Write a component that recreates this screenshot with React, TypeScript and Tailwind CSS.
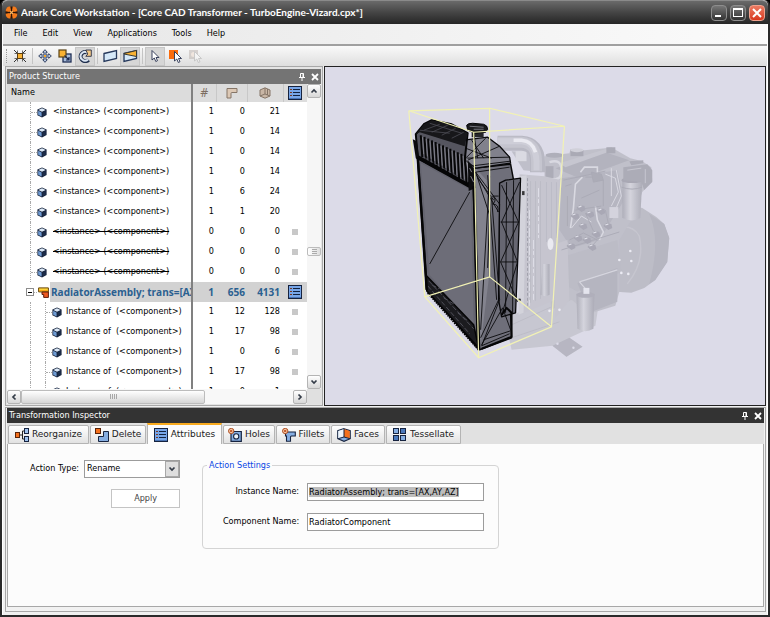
import { useEffect, useRef } from "react";
import type { ReactNode } from "react";

const ui = "font-['DejaVu_Sans_Condensed','DejaVu_Sans',sans-serif]";

/* ---------- icons ---------- */

function LogoIcon() {
  return (
    <svg width="13" height="13" viewBox="0 0 13 13" aria-hidden="true">
      <circle cx="6.5" cy="6.5" r="6" fill="#2a1408" />
      <g fill="#f47a1a">
        <path d="M2 1.5Q3.5.2 5.3.6L6 4.2 4.2 6 .7 5.2Q.6 3 2 1.5Z" />
        <path d="M11 1.5Q9.5.2 7.7.6L7 4.2 8.8 6l3.5-.8Q12.4 3 11 1.5Z" />
        <path d="M2 11.5Q3.5 12.8 5.3 12.4L6 8.8 4.2 7 .7 7.8Q.6 10 2 11.5Z" />
        <path d="M11 11.5Q9.5 12.8 7.7 12.4L7 8.8 8.8 7l3.5.8Q12.4 10 11 11.5Z" />
      </g>
      <path d="M5 5l3 3M8 5L5 8" stroke="#ffb45a" strokeWidth="1.2" />
    </svg>
  );
}

function FitIcon() {
  return (
    <svg width="14" height="14" viewBox="0 0 14 14" aria-hidden="true">
      <path d="M1 1l4 4M13 1L9 5M1 13l4-4M13 13L9 9" stroke="#333" strokeWidth="1" />
      <path d="M1.5 4.5h3v-3M12.5 4.5h-3v-3M1.5 9.5h3v3M12.5 9.5h-3v3" fill="none" stroke="#444" strokeWidth=".8" />
      <rect x="4.5" y="4.5" width="5" height="5" fill="#f9b233" stroke="#5a3d10" />
    </svg>
  );
}

function MoveIcon() {
  return (
    <svg width="14" height="14" viewBox="0 0 14 14" aria-hidden="true">
      <path
        d="M7 .7L9.3 3.3H8v2.7h2.7V4.7L13.3 7l-2.6 2.3V8H8v2.7h1.3L7 13.3 4.7 10.7H6V8H3.3v1.3L.7 7l2.6-2.3V6H6V3.3H4.7Z"
        fill="#b9c9e2"
        stroke="#27375a"
        strokeWidth=".9"
      />
      <rect x="6" y="6" width="2" height="2" fill="#f7a823" />
    </svg>
  );
}

function ScaleIcon() {
  return (
    <svg width="14" height="14" viewBox="0 0 14 14" aria-hidden="true">
      <rect x="5" y="5" width="8" height="8" fill="#a8bddc" stroke="#1f2f55" strokeWidth="1.3" />
      <rect x="1" y="1" width="7" height="7" fill="#f9b233" stroke="#5a4316" strokeWidth="1.2" />
      <path d="M6.5 6.5L11 11M11 8v3H8" fill="none" stroke="#1a2850" strokeWidth="1.2" />
    </svg>
  );
}

function RotateIcon() {
  return (
    <svg width="14" height="14" viewBox="0 0 14 14" aria-hidden="true">
      <path d="M10.5 10.8A4.6 4.6 0 1 1 9 3.3" fill="none" stroke="#1f2f4e" strokeWidth="4" />
      <path d="M10 10.5A4.4 4.4 0 1 1 9 3.3" fill="none" stroke="#dbe6f4" strokeWidth="2" />
      <path d="M7.8 1h5.5v6.3H7.8L9.8 5Z" fill="#f3c987" stroke="#2a2f44" strokeWidth=".9" />
    </svg>
  );
}

function PlaneIcon() {
  return (
    <svg width="15" height="14" viewBox="0 0 15 14" aria-hidden="true">
      <path d="M1 4.5L13.5 1.5v8L1 12.5Z" fill="#d5e8f8" stroke="#26395c" strokeWidth="1.3" />
    </svg>
  );
}

function ClipIcon() {
  return (
    <svg width="15" height="14" viewBox="0 0 15 14" aria-hidden="true">
      <path d="M1 4.5L13.5 1.5v8L1 12.5Z" fill="#d5e8f8" stroke="#26395c" strokeWidth="1.3" />
      <path d="M1 4.5L13.5 1.5v6L1 5Z" fill="#f9b233" stroke="#3b3a30" strokeWidth="1" />
    </svg>
  );
}

const cursorPath = "M0 0v9.5l2.3-2L3.8 11l1.7-.8L4 7h3Z";

function PointerIcon() {
  return (
    <svg width="12" height="14" viewBox="0 0 12 14" aria-hidden="true">
      <path d={cursorPath} transform="translate(3 1.5)" fill="#fff" stroke="#26304e" strokeWidth=".9" />
    </svg>
  );
}

function PickIcon({ faded = false }: { faded?: boolean }) {
  return (
    <svg width="14" height="14" viewBox="0 0 14 14" aria-hidden="true" opacity={faded ? 0.45 : 1}>
      <rect x="1" y="1" width="9" height="9" fill={faded ? "#b5aaa5" : "#fb6b0b"} />
      {faded && <circle cx="5.5" cy="5.5" r="2.5" fill="#f3dccb" />}
      <path d={cursorPath} transform="translate(6.5 2.5)" fill="#fff" stroke={faded ? "#999" : "#26304e"} strokeWidth=".9" />
    </svg>
  );
}

function PinIcon() {
  return (
    <svg width="8" height="8" viewBox="0 0 8 8" aria-hidden="true" fill="none" stroke="#fff">
      <path d="M2.5.5h3v4h-3zM1 4.5h6M4 5v3" />
      <path d="M5 .5v4" />
    </svg>
  );
}

function CrossIcon() {
  return (
    <svg width="8" height="8" viewBox="0 0 8 8" aria-hidden="true">
      <path d="M1 1l6 6M7 1L1 7" stroke="#fff" strokeWidth="1.8" />
    </svg>
  );
}

function CubeIcon() {
  return (
    <svg width="10" height="11" viewBox="0 0 10 11" aria-hidden="true" className="shrink-0">
      <path d="M5 .4L9.6 2.6v5.4L5 10.6.4 8.2V2.6Z" fill="#16233c" />
      <path d="M5 1.2L8.6 2.9 5 4.7 1.4 2.9Z" fill="#dce9f7" />
      <path d="M1.2 3.8L4.6 5.5v4L1.2 7.7Z" fill="#6f9bd2" />
      <path d="M8.8 3.8L5.5 5.5v4l3.3-1.8Z" fill="#1c2c48" />
    </svg>
  );
}

function AssemblyIcon() {
  return (
    <svg width="11" height="11" viewBox="0 0 11 11" aria-hidden="true" className="shrink-0">
      <path d="M.6.9h9.8v4H.6Z" fill="#ffd43a" stroke="#6b4708" />
      <path d="M4 5h6.4v5.4H5.7V7.5H4Z" fill="#ef5a23" stroke="#5e1c0a" />
      <path d="M1 3.5h9" stroke="#f9a818" />
    </svg>
  );
}

function ListIcon() {
  return (
    <svg width="14" height="14" viewBox="0 0 14 14" aria-hidden="true" className="inline-block">
      <rect x=".5" y=".5" width="13" height="13" fill="#78a6e8" stroke="#16233f" />
      <path d="M5 3.5h7M5 6.5h7M5 9.5h7" stroke="#13233f" />
      <path d="M2 3.5h2M2 6.5h2M2 9.5h2" stroke="#7a3a22" />
      <path d="M1 12.5h12" stroke="#4a74b4" />
    </svg>
  );
}

function BendIcon() {
  return (
    <svg width="12" height="12" viewBox="0 0 12 12" aria-hidden="true" className="inline-block">
      <path d="M1 1.5h10v4H6q-1 0-1 1V11H1Z" fill="#dcc8b5" stroke="#857567" strokeWidth="1" />
    </svg>
  );
}

function SolidIcon() {
  return (
    <svg width="12" height="12" viewBox="0 0 12 12" aria-hidden="true" className="inline-block">
      <path d="M6 .8L11 3v6L6 11.2 1 9V3Z" fill="#c9b6a5" stroke="#857567" />
      <path d="M6 1v6M6 7l5 2M6 7L1 9M8.5 2v6" stroke="#857567" fill="none" />
    </svg>
  );
}

function Chevron({ dir }: { dir: "up" | "down" | "left" | "right" }) {
  const d = {
    up: "M1.5 5.5L4 3l2.5 2.5",
    down: "M1.5 2.5L4 5l2.5-2.5",
    left: "M5.5 1.5L3 4l2.5 2.5",
    right: "M2.5 1.5L5 4 2.5 6.5",
  }[dir];
  return (
    <svg width="8" height="8" viewBox="0 0 8 8" aria-hidden="true">
      <path d={d} fill="none" stroke="#343c48" strokeWidth="1.7" />
    </svg>
  );
}

function ReorganizeIcon() {
  return (
    <svg width="14" height="14" viewBox="0 0 14 14" aria-hidden="true">
      <path d="M5 7h2.5M7.5 3v8M7.5 3H10M7.5 11H10" stroke="#222" fill="none" />
      <rect x=".5" y="4.5" width="4" height="5" fill="#f4701d" stroke="#5a2408" />
      <rect x="9.5" y=".5" width="4" height="5" fill="#9fc2ee" stroke="#16233f" />
      <rect x="9.5" y="8.5" width="4" height="5" fill="#9fc2ee" stroke="#16233f" />
    </svg>
  );
}

function DeleteIcon() {
  return (
    <svg width="14" height="14" viewBox="0 0 14 14" aria-hidden="true">
      <path d="M8.5 3.5h5v10h-10v-5h5Z" fill="#86aee2" stroke="#16233f" />
      <rect x=".5" y=".5" width="5" height="5" fill="#f4701d" stroke="#5a2408" />
    </svg>
  );
}

function BadgeX() {
  return (
    <>
      <circle cx="3.2" cy="3" r="2.7" fill="#f6c6a4" stroke="#a8471b" strokeWidth=".9" />
      <path d="M2 1.8l2.4 2.4M4.4 1.8L2 4.2" stroke="#b6400d" strokeWidth=".9" />
    </>
  );
}

function HolesIcon() {
  return (
    <svg width="14" height="14" viewBox="0 0 14 14" aria-hidden="true">
      <path d="M3 3.5h10.3v9.8H3Z" fill="#86aee2" stroke="#16233f" strokeWidth="1.2" />
      <circle cx="8.2" cy="8.4" r="2.6" fill="#eef4fb" stroke="#16233f" strokeWidth="1.1" />
      <BadgeX />
    </svg>
  );
}

function FilletsIcon() {
  return (
    <svg width="14" height="14" viewBox="0 0 14 14" aria-hidden="true">
      <path d="M3.5 4h9.8v4H9.5q-1 0-1 1v4.3H4.5V8h-1Z" fill="#86aee2" stroke="#16233f" strokeWidth="1.1" />
      <BadgeX />
    </svg>
  );
}

function FacesIcon() {
  return (
    <svg width="14" height="14" viewBox="0 0 14 14" aria-hidden="true">
      <path d="M7 .7l6.2 2v8L7 13.3.8 10.7v-8Z" fill="#86aee2" stroke="#16233f" strokeWidth="1.2" />
      <path d="M7 .9v8L1.2 10.5V3Z" fill="#eff5fb" />
      <path d="M7 .9v8l5.8 1.6V3Z" fill="#f4701d" />
      <path d="M7 1v8M7 9l6 1.7M7 9l-6 1.7" stroke="#16233f" fill="none" />
    </svg>
  );
}

function TessellateIcon() {
  return (
    <svg width="14" height="14" viewBox="0 0 14 14" aria-hidden="true" stroke="#16233f">
      <rect x=".5" y=".5" width="5" height="5" fill="#86aee2" />
      <rect x="7.500" y=".5" width="5" height="5" fill="#4a78bc" />
      <rect x=".5" y="7.500" width="5" height="5" fill="#4a78bc" />
      <rect x="7.500" y="7.500" width="5" height="5" fill="#86aee2" />
    </svg>
  );
}

/* ---------- title, menu, tool bar ---------- */

function TitleBar() {
  return (
    <header className="flex h-6 items-center gap-[3px] rounded-t-md border-t border-[#8a8a8a] bg-linear-to-b from-[#6a6a6a] via-[#454545] via-50% to-[#262626] pr-[3px] pl-[3px]">
      <LogoIcon />
      <h1 className="flex-1 truncate font-['Lato',sans-serif] text-[10px] font-bold text-white">
        Anark Core Workstation - [Core CAD Transformer - TurboEngine-Vizard.cpx*]
      </h1>
      <div className="flex gap-[3px]">
        <button aria-label="Minimize" className="flex size-4 items-end rounded-sm border border-[#8d8d8d] bg-linear-to-b from-[#777] to-[#333] px-[3px] pb-[3px]">
          <span className="h-[2px] w-[6px] bg-white" />
        </button>
        <button aria-label="Maximize" className="flex size-4 items-center justify-center rounded-sm border border-[#8d8d8d] bg-linear-to-b from-[#777] to-[#333]">
          <span className="h-[9px] w-[10px] border border-t-2 border-white" />
        </button>
        <button aria-label="Close" className="flex size-4 items-center justify-center rounded-sm border border-[#f0a08c] bg-linear-to-b from-[#ea7a62] to-[#d8351b]">
          <svg width="10" height="10" viewBox="0 0 10 10" aria-hidden="true">
            <path d="M1 1l8 8M9 1L1 9" stroke="#fff" strokeWidth="2" />
          </svg>
        </button>
      </div>
    </header>
  );
}

function MenuBar() {
  return (
    <nav className="flex h-[22px] items-center gap-[15px] border-b-2 border-[#a0a0a0] bg-linear-to-r from-[#e6e6e6] to-[#fbfbfb] pl-[11px] text-[9px] text-black">
      {["File", "Edit", "View", "Applications", "Tools", "Help"].map((m) => (
        <button key={m}>{m}</button>
      ))}
    </nav>
  );
}

function Tool({ label, on = false, children }: { label: string; on?: boolean; children: ReactNode }) {
  return (
    <button
      aria-label={label}
      className={
        "flex h-[19px] w-5 items-center justify-center border " +
        (on ? "border-[#c6c6c6] bg-[#d6d6d6]" : "border-transparent")
      }
    >
      {children}
    </button>
  );
}

function Gap() {
  return <span className="mx-[2px] h-4 w-px bg-[#c4c4c4]" />;
}

function ToolBar() {
  return (
    <div className="flex h-5 items-center bg-linear-to-b from-[#fafafa] to-[#dedede] pl-[3px]">
      <span className="mr-[3px] h-[14px] border-l border-dotted border-[#999]" />
      <Tool label="Fit all"><FitIcon /></Tool>
      <Gap />
      <Tool label="Move"><MoveIcon /></Tool>
      <Tool label="Scale"><ScaleIcon /></Tool>
      <Tool label="Rotate" on><RotateIcon /></Tool>
      <Gap />
      <Tool label="Plane"><PlaneIcon /></Tool>
      <Tool label="Clip plane" on><ClipIcon /></Tool>
      <Gap />
      <Tool label="Select" on><PointerIcon /></Tool>
      <Tool label="Pick face"><PickIcon /></Tool>
      <Tool label="Pick body"><PickIcon faded /></Tool>
    </div>
  );
}

/* ---------- product structure ---------- */

type Row = {
  kind: "component" | "removed" | "assembly" | "child";
  counts: [number, number, number];
  mark?: boolean;
};

const rows: Row[] = [
  { kind: "component", counts: [1, 0, 21] },
  { kind: "component", counts: [1, 0, 14] },
  { kind: "component", counts: [1, 0, 14] },
  { kind: "component", counts: [1, 0, 14] },
  { kind: "component", counts: [1, 6, 24] },
  { kind: "component", counts: [1, 1, 20] },
  { kind: "removed", counts: [0, 0, 0], mark: true },
  { kind: "removed", counts: [0, 0, 0], mark: true },
  { kind: "removed", counts: [0, 0, 0], mark: true },
  { kind: "assembly", counts: [1, 656, 4131] },
  { kind: "child", counts: [1, 12, 128], mark: true },
  { kind: "child", counts: [1, 17, 98], mark: true },
  { kind: "child", counts: [1, 0, 6], mark: true },
  { kind: "child", counts: [1, 17, 98], mark: true },
  { kind: "child", counts: [1, 0, 1], mark: true },
];

const selected = "bg-[#d2d2d2] font-['Open_Sans',sans-serif] text-[10px] font-bold text-[#2b6090]";

function NameCell({ kind }: { kind: Row["kind"] }) {
  if (kind === "assembly") {
    return (
      <div className="flex h-5 items-center pl-[19px]">
        <button aria-label="Collapse" className="flex size-2 shrink-0 items-center justify-center border border-[#8c8c8c] bg-white">
          <span className="h-px w-1 bg-black" />
        </button>
        <span className="mr-px w-[3px] shrink-0 border-t border-dotted border-[#aaa]" />
        <AssemblyIcon />
        <span className={"ml-px h-5 flex-1 overflow-hidden pl-px leading-5 whitespace-nowrap " + selected}>
          RadiatorAssembly; trans=[AX,AY,AZ]
        </span>
      </div>
    );
  }
  const child = kind === "child";
  return (
    <div className="flex h-5 items-center pl-[23px]">
      <span className={"flex h-5 shrink-0 items-center border-l border-dotted border-[#aaa] " + (child ? "w-[15px]" : "w-[7px]")}>
        {child ? null : <span className="w-[6px] border-t border-dotted border-[#aaa]" />}
      </span>
      {child ? (
        <span className="flex h-5 w-[7px] shrink-0 items-center border-l border-dotted border-[#aaa]">
          <span className="w-[6px] border-t border-dotted border-[#aaa]" />
        </span>
      ) : null}
      <CubeIcon />
      <span className={"whitespace-pre " + (child ? "ml-1" : "ml-[6px]") + (kind === "removed" ? " line-through" : "")}>
        {child ? "Instance of  (<component>)" : "<instance> (<component>)"}
      </span>
    </div>
  );
}

function StructureTable() {
  return (
    <table className="w-full table-fixed border-collapse">
      <colgroup>
        <col />
        <col className="w-[24px]" />
        <col className="w-[31px]" />
        <col className="w-[36px]" />
        <col className="w-[24px]" />
      </colgroup>
      <thead>
        <tr className="h-[18px] bg-[#dcdcdc]">
          <th className="border-r-2 border-[#808080] pl-1 text-left font-normal">Name</th>
          <th className="border-r border-[#c8c8c8] text-[12px] leading-4 font-normal text-[#7c6c60]">#</th>
          <th className="border-r border-[#c8c8c8] leading-none"><BendIcon /></th>
          <th className="border-r border-[#c8c8c8] leading-none"><SolidIcon /></th>
          <th className="leading-none"><ListIcon /></th>
        </tr>
      </thead>
      <tbody>
        {rows.map((r, i) => {
          const sel = r.kind === "assembly";
          const num = "text-right " + (sel ? selected : "");
          return (
            <tr key={i} className="h-5">
              <td className="overflow-hidden border-r-2 border-[#808080] p-0">
                <NameCell kind={r.kind} />
              </td>
              <td className={num + " pr-[2px]"}>{r.counts[0]}</td>
              <td className={num + " pr-[2px]"}>{r.counts[1]}</td>
              <td className={num + " pr-[3px]"}>{r.counts[2]}</td>
              <td className={"text-center leading-none " + (sel ? "bg-[#d2d2d2]" : "")}>
                {sel ? <ListIcon /> : r.mark ? <span className="inline-block size-[6px] bg-[#c8c8c8]" /> : null}
              </td>
            </tr>
          );
        })}
      </tbody>
    </table>
  );
}

const scrollButton =
  "flex size-[14px] shrink-0 items-center justify-center rounded-xs border border-[#b4b4b4] bg-linear-to-b from-white to-[#d8d8d8]";

function PanelTitle({ title, dark = false }: { title: string; dark?: boolean }) {
  return (
    <div className={"flex h-[15px] shrink-0 items-center gap-[5px] px-[2px] text-[9px] text-white " + (dark ? "bg-[#333]" : "bg-[#747474]")}>
      <h2 className="flex-1">{title}</h2>
      <button aria-label={"Pin " + title}><PinIcon /></button>
      <button aria-label={"Close " + title}><CrossIcon /></button>
    </div>
  );
}

function ProductStructure() {
  return (
    <section className="flex w-[318px] shrink-0 flex-col border border-[#a8a8a8] bg-[#e4e4e4] p-px pt-[2px] text-[9px] text-black">
      <PanelTitle title="Product Structure" />
      <div className="flex min-h-0 flex-1">
        <div className="flex min-w-0 flex-1 flex-col">
          <div className="min-h-0 flex-1 overflow-hidden bg-white">
            <StructureTable />
          </div>
          <div className="flex h-[15px] shrink-0 items-center bg-[#f8f8f8]">
            <button aria-label="Scroll left" className={scrollButton}><Chevron dir="left" /></button>
            <div className="flex h-[14px] w-[184px] items-center justify-center gap-px rounded-xs border border-[#bcbcbc] bg-linear-to-b from-white to-[#d6d6d6]">
              {[0, 1, 2, 3].map((n) => (
                <span key={n} className="h-[5px] w-px bg-[#a8a8a8]" />
              ))}
            </div>
            <span className="flex-1" />
            <button aria-label="Scroll right" className={scrollButton}><Chevron dir="right" /></button>
          </div>
        </div>
        <div className="flex w-[14px] shrink-0 flex-col bg-[#f6f6f6]">
          <button aria-label="Scroll up" className={scrollButton}><Chevron dir="up" /></button>
          <span className="h-[149px]" />
          <div className="flex h-[9px] flex-col items-center justify-center gap-px rounded-xs border border-[#bcbcbc] bg-linear-to-r from-white to-[#dedede]">
            <span className="h-px w-[5px] bg-[#aaa]" />
            <span className="h-px w-[5px] bg-[#aaa]" />
            <span className="h-px w-[5px] bg-[#aaa]" />
          </div>
          <span className="flex-1" />
          <button aria-label="Scroll down" className={scrollButton}><Chevron dir="down" /></button>
          <span className="h-[15px] bg-[#e0e0e0]" />
        </div>
      </div>
    </section>
  );
}

/* ---------- 3D view ---------- */

function Engine() {
  return (
    <g opacity=".88">
      {/* base rail and foot */}
      <path d="M505 318L552 300 572 290 600 300 596 326 570 338 583 347 567 357 553 346 512 350Z" fill="#c5c5ce" />
      <path d="M553 346L570 338 583 347 567 357Z" fill="#b2b2bd" />
      <circle cx="574" cy="348" r="1.2" fill="#dcdbe8" />
      <circle cx="558" cy="344" r="1.2" fill="#dcdbe8" />
      <path d="M512 325L552 307M512 338L560 322" stroke="#b6b6c0" strokeWidth=".8" fill="none" />
      {/* flywheel housing */}
      <path d="M628 205L643 208 657 217 665 224 670 238 668 262 656 280 645 288 632 293 617 292 600 270 598 230Z" fill="#b9b9c3" />
      <path d="M650 214Q662 240 650 284L656 280 668 262 670 238 665 224Z" fill="#b1b1bc" />
      <path d="M612 230Q632 222 640 236 646 262 628 284" fill="none" stroke="#c3c3cc" strokeWidth="1.5" />
      {/* block */}
      <path d="M545 156L570 153 571 149 585 150 606 148 612 147 617 150 631 158 643 161 652 167 653 181 643 192 632 220 620 240 620 292 616 306 590 314 572 300 552 310 545 250Z" fill="#bdbdc7" />
      <path d="M562 178L618 170 625 200 600 240 572 248 560 230Z" fill="#b1b1bc" />
      <path d="M556 168L606 152 630 160 580 178Z" fill="#aeaeb9" />
      <path d="M560 163L606 149 611 151 566 167Z" fill="#c4c4cd" />
      <path d="M566 256L618 240 622 272 578 292 566 285Z" fill="#b8b8c2" />
      <path d="M578 283L618 268 618 302 590 313Z" fill="#b0b0bb" />
      <path d="M553 245L568 240 570 300 556 318Z" fill="#c3c3cc" />
      {/* valve cover fittings */}
      <path d="M571 150h13v6h-13z" fill="#a4a4af" />
      <ellipse cx="577.5" cy="150" rx="6.5" ry="2" fill="#cfcfd7" />
      <ellipse cx="555" cy="155" rx="9" ry="2.5" fill="#a9a9b4" />
      <path d="M607 147h9v6h-9zM630 161l14-1v3l-12 2z" fill="#a5a5b0" />
      <path d="M550 162Q562 158 562 170T551 178" fill="none" stroke="#d9d9e1" strokeWidth="2.5" />
      <path d="M546 166h8v12h-8z" fill="#a6a6b1" />
      {/* fuel lines */}
      <g fill="none" stroke="#d9d9e1" strokeWidth="1.6">
        <path d="M581 172L585 167 598 167 598 174" />
        <path d="M583 177L576 184 574 208 571 228" />
        <path d="M606 174L616 178 619 192 612 206" strokeWidth="1" />
        <path d="M612 168L612 196M617 170L622 196 616 210" strokeWidth="1" />
        <path d="M596 206L598 220 604 232 600 240" />
        <path d="M572 228L582 216 592 222" strokeWidth="1" />
      </g>
      <g stroke="#a3a3af" strokeWidth=".9" fill="none">
        <path d="M564 180L606 171M566 186l6-2M586 177h12M568 196v30M604 180v26M582 198l18-8M576 210l26-4" />
        <path d="M570 240l14-7 14 7-8 9M562 250l58-18M586 213l8 18M606 210l4 18" />
        <path d="M592 172l10 2 2 6-10 2ZM626 168l22-2 3 10-14 7-12-4Z" fill="#a6a6b1" />
      </g>
      {/* small parts on the side of the block */}
      {[
        [575, 216], [583, 226], [590, 214], [578, 238], [596, 234], [587, 240],
        [608, 226], [601, 211], [571, 246], [592, 247], [581, 208],
      ].map(([x, y], i) => (
        <g key={i}>
          <path d={`M${x - 4} ${y}l3-3 5 1 1 4-4 2z`} fill="#a2a2ae" />
          <path d={`M${x - 2} ${y - 1}l3-1`} stroke="#e4e4ec" strokeWidth="1.2" />
        </g>
      ))}
      {[
        [631, 251], [632, 261], [622, 273], [629, 274], [620, 260], [560, 310], [550, 311],
      ].map(([x, y], i) => (
        <circle key={i} cx={x} cy={y} r="1.3" fill="#eeeef5" />
      ))}
      <path d="M580 282L618 270M580 282l8 9" stroke="#d5d5dd" strokeWidth="1.2" fill="none" />
      <path d="M610 207h9v11h-9z" fill="#d3d3dc" />
      {/* upper filter */}
      <path d="M623 180h20l-2 38q-8 5-18 0Z" fill="url(#can)" />
      <ellipse cx="633" cy="180" rx="11" ry="3" fill="#a2a2ad" />
      <path d="M622 187q11 4 21 0" stroke="#a5a5b0" fill="none" />
      <path d="M624 167l24-3 5 6v12l-8 8-3-8-18-2Z" fill="#a6a6b1" />
      <path d="M628 170l14-2M646 169v14" stroke="#c5c5ce" />
      {/* lower filter */}
      <path d="M577 294h18l-1 35q-8 5-16 0Z" fill="url(#can)" />
      <ellipse cx="586" cy="295" rx="9" ry="3" fill="#aaaab5" />
      <path d="M584 288h6v6h-6z" fill="#e6e6ee" />
      {/* radiator fan shroud */}
      <path d="M520 174L545 176 562 180 560 220 556 300 520 315Z" fill="#c3c3cc" />
      <path d="M520 176l7-1-3 138-5 2Z" fill="#d2d2da" />
      <g stroke="#b3b3be" strokeWidth=".7">
        <path d="M531 181v122M536 181v120M541 181v118M547 182v60M552 182v58M557 182v56" />
      </g>
      <g stroke="#e2e2ea" strokeWidth=".9" strokeDasharray="9 2 4 3">
        <path d="M530 210v96M534 240v60M539 188v50" />
      </g>
      <path d="M528 178v128" stroke="#8f8f9b" strokeWidth=".8" strokeDasharray="3 2" />
      <ellipse cx="551" cy="244" rx="3" ry="6" fill="#ededf3" />
      <path d="M543 264h7v31q-4 3-9 0Z" fill="url(#can)" />
      <rect x="522.5" y="191" width="2.5" height="4" fill="#222" />
      <circle cx="520" cy="300" r="1.4" fill="#222" />
      {/* air intake */}
      <path d="M512 151L534 152 544 162 542 172 524 170Z" fill="#bcbcc6" />
      <path d="M516 151h11v10h-11z" fill="#dadae2" />
      <path d="M498 143H522Q538 144 538 162V172" fill="none" stroke="#b4b4bf" strokeWidth="15" />
      <path d="M498 142H522Q537 143 537 161V171" fill="none" stroke="#c2c2cc" strokeWidth="11" />
      <path d="M498 141H522Q536 142 537 161V170" fill="none" stroke="#cdcdd6" strokeWidth="6" />
      <path d="M514 140H522Q533 141 536 152" fill="none" stroke="#ededf3" strokeWidth="3.5" />
    </g>
  );
}

function Radiator() {
  const ribs = Array.from({ length: 13 }, (_, i) => i);
  return (
    <g strokeLinejoin="round">
      {/* side */}
      <path d="M474 168L511 164 514 180 511 312 512 338 480 350Z" fill="#6f6f7a" stroke="#08080a" strokeWidth="1.5" />
      <path d="M476 168L487 180 489 280 481 345Z" fill="#83838e" />
      <path d="M500 183L506 180 521 178 519 240 516 313 502 317 499 300Z" fill="#666671" stroke="#08080a" strokeWidth="1.3" />
      <g fill="none" stroke="#0a0a0c" strokeWidth=".9">
        <path d="M476 172L500 204 499 300 481 338M476 172L510 167M476 172L490 215 488 268M490 176L481 330" />
        <path d="M477 175L499 212M478 178L494 200M488 175L497 300M492 198L500 300 482 346" />
        <path d="M502 185L519 222 501 262 518 302M520 182L502 222 518 262 503 312M501 222H519M501 262H518M507 182L506 313M514 180L513 313" />
        <path d="M482 345L503 308 511 330M484 340L511 331M482 346L510 334" />
        <path d="M499 196h-6q5 4 0 8 7 0 5 8" />
      </g>
      <path d="M502 315L507 308 512 313V337L482 349" fill="none" stroke="#060607" strokeWidth="2" />
      {/* header tank */}
      <path d="M464 140L488 137 500 146 510 157 511 163 476 168 463 158Z" fill="#81818c" stroke="#08080a" strokeWidth="1.3" />
      <path d="M464 158L510 157M470 166L511 161M466 158L486 138M468 160L500 146M478 158L474 132M466 148L492 158M472 140L484 158" stroke="#0a0a0c" strokeWidth=".9" fill="none" />
      <path d="M416 134L424 124 432 120 452 124 468 133 465 160 470 188 418 158Z" fill="#55555f" stroke="#050506" strokeWidth="2" />
      <path d="M416 134L424 124 432 120 452 124 468 133 465 146 420 132Z" fill="#17171a" />
      <path d="M424 130L440 124M432 132L448 125M442 135L456 128M452 138L464 132M420 130l30 3M430 123l32 10" stroke="#4c4c55" strokeWidth=".8" />
      <path d="M413 139l4 2 3 20-4-3Z" fill="#0b0b0d" />
      {/* core */}
      <path d="M418 158L474 188 478 348 427 289Z" fill="#656570" stroke="#050506" strokeWidth="2" />
      <path d="M421 163L471 190 474 326 430 275Z" fill="#6d6d78" />
      <path d="M470 192L430 264" stroke="#0b0b0d" strokeWidth=".9" />
      {/* tank ribs */}
      {ribs.map((i) => {
        const x = 421 + i * 3.7;
        const y = 135 + i * 1.7;
        return (
          <g key={i}>
            <path d={`M${x} ${y}l1.5 ${22 + i * 0.6}`} stroke="#060607" strokeWidth="2" />
            <path d={`M${x + 1.7} ${y + 2}l1.3 ${17 + i * 0.6}`} stroke="#8b8b96" strokeWidth=".8" />
          </g>
        );
      })}
      <path d="M418 157L470 186" stroke="#050506" strokeWidth="4" />
      <path d="M424 157l42 24" stroke="#666671" strokeWidth=".6" strokeDasharray="4 3" />
      <path d="M468 160l6 8 2 20-7 3Z" fill="#0d0d0f" />
      <path d="M470 168l2 4M471 176l3 6" stroke="#84848e" />
      {/* lower tank */}
      <path d="M426 275L474 325 479 348 427 291Z" fill="#1b1b1f" stroke="#050506" strokeWidth="1.5" />
      <path d="M429 281L474 329M428 286L470 334M432 285l8 4M444 298l10 6M458 313l10 8" stroke="#5c5c66" strokeWidth=".8" strokeDasharray="5 2" />
      <path d="M418 158L427 290M474 186L479 349" stroke="#050506" strokeWidth="2.5" />
      <path d="M428 293L479 350" stroke="#050506" strokeWidth="2" strokeDasharray="1.5 1" />
      {/* filler cap */}
      <path d="M472 130h12v7h-12z" fill="#26262a" />
      <path d="M467 125Q468 123 473 123L484 124Q488 125 488 129L486 132 476 133 468 130Z" fill="#1a1a1d" stroke="#050506" />
      <path d="M470 126l14 1M474 129l10 0" stroke="#8d8d97" strokeWidth=".8" />
    </g>
  );
}

function Viewport() {
  return (
    <section aria-label="3D view" className="ml-px min-w-0 flex-1 border border-[#222] bg-[#dcdbe8]">
      <svg viewBox="325 67 441 338" className="h-full w-full" role="img" aria-label="Engine with selected radiator">
        <defs>
          <linearGradient id="can">
            <stop offset="0" stopColor="#a9a9b4" />
            <stop offset=".4" stopColor="#d4d4dc" />
            <stop offset="1" stopColor="#a6a6b1" />
          </linearGradient>
        </defs>
        <Engine />
        <Radiator />
        <path
          d="M409 110.5L490 108 565 126 474 132ZM409 110.5L425 297 479 358 552 327 565 126M474 132L479 358M490 108V277M425 297L490 277 552 327"
          fill="none"
          stroke="#f2f2b4"
          strokeWidth="1.2"
        />
      </svg>
    </section>
  );
}

/* ---------- transformation inspector ---------- */

const tabs: { name: string; icon: ReactNode; width: string }[] = [
  { name: "Reorganize", icon: <ReorganizeIcon />, width: "w-[81px]" },
  { name: "Delete", icon: <DeleteIcon />, width: "w-[56px]" },
  { name: "Attributes", icon: <ListIcon />, width: "w-[75px]" },
  { name: "Holes", icon: <HolesIcon />, width: "w-[52px]" },
  { name: "Fillets", icon: <FilletsIcon />, width: "w-[54px]" },
  { name: "Faces", icon: <FacesIcon />, width: "w-[54px]" },
  { name: "Tessellate", icon: <TessellateIcon />, width: "w-[75px]" },
];

function TabStrip() {
  return (
    <div role="tablist" className="flex h-[21px] shrink-0 items-end gap-px bg-[#e1e1e1] pl-px font-['DejaVu_Sans',sans-serif]">
      {tabs.map(({ name, icon, width }) => {
        const on = name === "Attributes";
        return (
          <button
            key={name}
            role="tab"
            aria-selected={on}
            className={
              "flex items-center justify-center gap-[3px] border-x border-[#b4b4b4] text-[9px] text-[#222] " +
              width +
              (on ? " h-[21px] border-t-2 border-t-[#f9ab1f] bg-[#fcfcfc]" : " h-[19px] rounded-t-xs border-t border-b bg-linear-to-b from-white to-[#e2e2e2]")
            }
          >
            {icon}
            {name}
          </button>
        );
      })}
    </div>
  );
}

const field = "h-[18px] w-[177px] border border-[#9c9c9c] bg-white px-px text-[9px] outline-none selection:bg-[#bdbdbd] selection:text-black";

function AttributesForm() {
  const instance = useRef<HTMLInputElement>(null);
  useEffect(() => {
    instance.current?.focus();
    instance.current?.select();
  }, []);
  return (
    <form className="flex flex-1 items-start gap-[22px] border border-t-0 border-[#a8a8a8] bg-[#fcfcfc] pt-4 pl-[22px]" onSubmit={(e) => e.preventDefault()}>
      <div className="flex flex-col items-end gap-[11px]">
        <div className="flex items-center gap-[5px]">
          <label htmlFor="action">Action Type:</label>
          <div className="relative">
            <select id="action" defaultValue="Rename" className="h-[18px] w-24 appearance-none border border-[#9c9c9c] bg-white px-[2px] text-[9px] outline-none">
              <option>Rename</option>
            </select>
            <span className="pointer-events-none absolute top-px right-px flex h-4 w-[14px] items-center justify-center border border-[#a8a8a8] bg-[#dedede]">
              <Chevron dir="down" />
            </span>
          </div>
        </div>
        <button className="h-[19px] w-[69px] border border-[#c4c4c4] bg-white text-[#444]">Apply</button>
      </div>
      <fieldset className="w-[297px] rounded-sm border border-[#d4d4d4] pr-[14px] pb-[17px]">
        <legend className="ml-1 px-[2px] leading-[10px] text-[#0a46e4]">Action Settings</legend>
        <div className="flex flex-col items-end gap-3 pt-[13px]">
          <div className="flex items-center gap-2">
            <label htmlFor="instance">Instance Name:</label>
            <input id="instance" ref={instance} className={field} defaultValue="RadiatorAssembly; trans=[AX,AY,AZ]" />
          </div>
          <div className="flex items-center gap-2">
            <label htmlFor="component">Component Name:</label>
            <input id="component" className={field} defaultValue="RadiatorComponent" />
          </div>
        </div>
      </fieldset>
    </form>
  );
}

function Inspector() {
  return (
    <section className="flex flex-1 flex-col border border-[#a8a8a8] bg-[#f2f2f2] px-px pb-1 text-[9px] text-black">
      <PanelTitle title="Transformation Inspector" dark />
      <TabStrip />
      <AttributesForm />
    </section>
  );
}

export default function App() {
  return (
    <div className="min-h-screen bg-black">
      <div className={"flex min-h-screen flex-col rounded-t-md border-x-2 border-b-2 border-[#2a2a2a] bg-[#f0f0f0] " + ui}>
        <TitleBar />
        <div className="flex flex-1 flex-col border-x border-white">
          <MenuBar />
          <ToolBar />
          <div className="flex flex-1 flex-col gap-px pr-px pb-[3px] pl-[2px]">
            <main className="flex h-[340px]">
              <ProductStructure />
              <Viewport />
            </main>
            <Inspector />
          </div>
        </div>
      </div>
    </div>
  );
}
